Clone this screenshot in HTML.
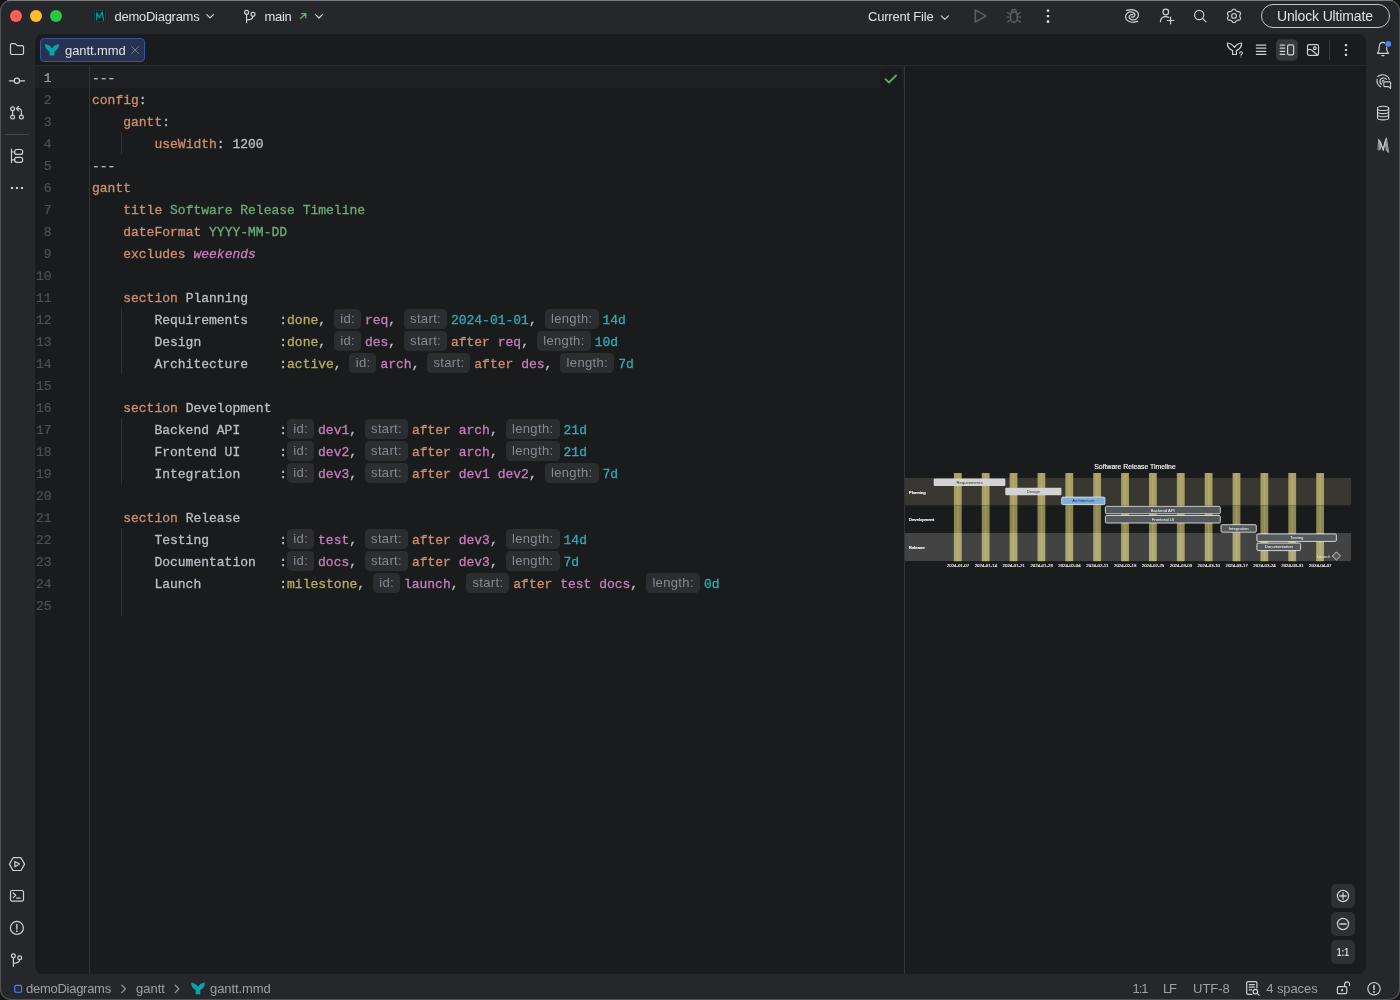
<!DOCTYPE html>
<html lang="en">
<head>
<meta charset="utf-8">
<title>gantt.mmd – demoDiagrams</title>
<style>
*{box-sizing:border-box;margin:0;padding:0}
html,body{width:1400px;height:1000px;overflow:hidden;background:#161617}
body{font-family:"Liberation Sans",sans-serif;font-size:13px;color:#dfe1e5;position:relative}
.abs{position:absolute}
#win{will-change:transform;position:absolute;left:0;top:0;width:1400px;height:1000px;background:#26272b;border-radius:11px;overflow:hidden}
#panel{position:absolute;left:35px;top:34px;width:1330.6px;height:940.4px;background:#1a1b1d;border-radius:8px;overflow:hidden}
.tl{position:absolute;top:10px;width:12px;height:12px;border-radius:50%}
.t13{position:absolute;font-size:13px;line-height:16px;white-space:nowrap;color:#dfe1e5}
svg{position:absolute;overflow:visible}
.ic{fill:none;stroke:#ced0d6;stroke-width:1.1;stroke-linecap:round;stroke-linejoin:round}
/* editor */
#code{position:absolute;left:57px;top:33.5px;-webkit-text-stroke:0.3px;font-family:"Liberation Mono",monospace;font-size:13px;line-height:22px;white-space:pre;color:#bcbec4}
#code div{height:22px}
#nums{position:absolute;left:0;top:33.5px;-webkit-text-stroke:0.2px;width:16.6px;font-family:"Liberation Mono",monospace;font-size:13px;line-height:22px;text-align:right;color:#4b5059}
.k{color:#cf8e6d}.s{color:#6aab73}.w{color:#c77dbb;font-style:italic}.y{color:#b3ae60}.p{color:#c77dbb}.n{color:#2aacb8}.t{color:#bcbec4}
.h{display:inline-block;height:20px;line-height:19px;vertical-align:top;margin-top:-1px;background:#2c2d31;border-radius:4.5px;color:#868991;font-family:"Liberation Sans",sans-serif;font-size:13px;text-align:center;letter-spacing:.35px;-webkit-text-stroke:0;padding-left:.35px}
.hi{width:27px;margin-right:4px}
.hs{width:43px;margin-right:4px}
.hl{width:54px;margin-right:4px}
.st{position:absolute;top:981px;font-size:13px;line-height:16px;color:#9da0a8;white-space:nowrap}
</style>
</head>
<body>
<div id="win">
  <!-- title bar -->
  <div class="tl" style="left:10px;background:#ff5f57"></div>
  <div class="tl" style="left:30px;background:#febc2e"></div>
  <div class="tl" style="left:50px;background:#28c840"></div>
  <div class="t13" style="left:114.5px;top:9px;letter-spacing:-0.27px">demoDiagrams</div>
  <div class="t13" style="left:264.5px;top:9px;letter-spacing:-0.3px">main</div>
  <div class="t13" style="left:868px;top:9px;letter-spacing:-0.2px">Current File</div>
  <div class="abs" style="left:1260.8px;top:4.2px;width:129.2px;height:23.6px;border:1.2px solid #c3c6cd;border-radius:12px"></div>
  <div class="t13" style="left:1277px;top:7.8px;font-size:14px;letter-spacing:-0.15px">Unlock Ultimate</div>

  <!-- editor panel -->
  <div id="panel">
    <!-- tab bar -->
    <div class="abs" style="left:0;top:31px;width:1331px;height:1px;background:#27292c"></div>
    <div class="abs" style="left:5px;top:3.8px;width:105px;height:24.2px;background:#263250;border:1.2px solid #35549a;border-radius:4px"></div>
    <div class="t13" style="left:30px;top:9px;letter-spacing:-0.1px">gantt.mmd</div>
    <!-- current line -->
    <div class="abs" style="left:0;top:32px;width:869px;height:22px;background:#1f2023"></div>
    <div class="abs" style="left:845px;top:34px;width:22px;height:22px;background:#1a1b1d;border-radius:5px"></div>
    <!-- gutter line & splitter -->
    <div class="abs" style="left:54px;top:32px;width:1px;height:908px;background:#303236"></div>
    <div class="abs" style="left:869px;top:32px;width:1px;height:908px;background:#313336"></div>
    <!-- indent guides -->
    <div class="abs" style="left:86px;top:98px;width:1px;height:22px;background:#2e3033"></div>
    <div class="abs" style="left:86px;top:274px;width:1px;height:66px;background:#2e3033"></div>
    <div class="abs" style="left:86px;top:384px;width:1px;height:66px;background:#2e3033"></div>
    <div class="abs" style="left:86px;top:494px;width:1px;height:88px;background:#2e3033"></div>
    <div id="nums"><div style="color:#a1a3ab">1</div><div>2</div><div>3</div><div>4</div><div>5</div><div>6</div><div>7</div><div>8</div><div>9</div><div>10</div><div>11</div><div>12</div><div>13</div><div>14</div><div>15</div><div>16</div><div>17</div><div>18</div><div>19</div><div>20</div><div>21</div><div>22</div><div>23</div><div>24</div><div>25</div></div>
    <div id="code"><div>---</div><div><span class="k">config</span>:</div><div>    <span class="k">gantt</span>:</div><div>        <span class="k">useWidth</span>: 1200</div><div>---</div><div><span class="k">gantt</span></div><div>    <span class="k">title</span> <span class="s">Software Release Timeline</span></div><div>    <span class="k">dateFormat</span> <span class="s">YYYY-MM-DD</span></div><div>    <span class="k">excludes</span> <span class="w">weekends</span></div><div></div><div>    <span class="k">section</span> Planning</div><div>        Requirements    :<span class="y">done</span>, <span class="h hi">id:</span><span class="p">req</span>, <span class="h hs">start:</span><span class="n">2024-01-01</span>, <span class="h hl">length:</span><span class="n">14d</span></div><div>        Design          :<span class="y">done</span>, <span class="h hi">id:</span><span class="p">des</span>, <span class="h hs">start:</span><span class="k">after</span> <span class="p">req</span>, <span class="h hl">length:</span><span class="n">10d</span></div><div>        Architecture    :<span class="y">active</span>, <span class="h hi">id:</span><span class="p">arch</span>, <span class="h hs">start:</span><span class="k">after</span> <span class="p">des</span>, <span class="h hl">length:</span><span class="n">7d</span></div><div></div><div>    <span class="k">section</span> Development</div><div>        Backend API     :<span class="h hi">id:</span><span class="p">dev1</span>, <span class="h hs">start:</span><span class="k">after</span> <span class="p">arch</span>, <span class="h hl">length:</span><span class="n">21d</span></div><div>        Frontend UI     :<span class="h hi">id:</span><span class="p">dev2</span>, <span class="h hs">start:</span><span class="k">after</span> <span class="p">arch</span>, <span class="h hl">length:</span><span class="n">21d</span></div><div>        Integration     :<span class="h hi">id:</span><span class="p">dev3</span>, <span class="h hs">start:</span><span class="k">after</span> <span class="p">dev1 dev2</span>, <span class="h hl">length:</span><span class="n">7d</span></div><div></div><div>    <span class="k">section</span> Release</div><div>        Testing         :<span class="h hi">id:</span><span class="p">test</span>, <span class="h hs">start:</span><span class="k">after</span> <span class="p">dev3</span>, <span class="h hl">length:</span><span class="n">14d</span></div><div>        Documentation   :<span class="h hi">id:</span><span class="p">docs</span>, <span class="h hs">start:</span><span class="k">after</span> <span class="p">dev3</span>, <span class="h hl">length:</span><span class="n">7d</span></div><div>        Launch          :<span class="y">milestone</span>, <span class="h hi">id:</span><span class="p">launch</span>, <span class="h hs">start:</span><span class="k">after</span> <span class="p">test docs</span>, <span class="h hl">length:</span><span class="n">0d</span></div><div></div></div>
    <svg id="gantt" width="470" height="130" viewBox="900 455 470 130" style="left:865px;top:421px" font-family="Liberation Sans, sans-serif">
    <rect x="905" y="477.9" width="446.1" height="27.4" fill="#383731"/>
    <rect x="905" y="533" width="446.1" height="28" fill="#434343"/>
    <rect x="953.90" y="473" width="7.8" height="32.3" fill="#a6a062"/>
    <rect x="953.90" y="505.3" width="7.8" height="27.7" fill="#8d8851"/>
    <rect x="953.90" y="533" width="7.8" height="28.2" fill="#aea972"/>
    <path d="M957.80 473V561.2" stroke="#dcd8b0" stroke-opacity="0.55" stroke-width="0.5"/>
    <rect x="981.77" y="473" width="7.8" height="32.3" fill="#a6a062"/>
    <rect x="981.77" y="505.3" width="7.8" height="27.7" fill="#8d8851"/>
    <rect x="981.77" y="533" width="7.8" height="28.2" fill="#aea972"/>
    <path d="M985.67 473V561.2" stroke="#dcd8b0" stroke-opacity="0.55" stroke-width="0.5"/>
    <rect x="1009.64" y="473" width="7.8" height="32.3" fill="#a6a062"/>
    <rect x="1009.64" y="505.3" width="7.8" height="27.7" fill="#8d8851"/>
    <rect x="1009.64" y="533" width="7.8" height="28.2" fill="#aea972"/>
    <path d="M1013.54 473V561.2" stroke="#dcd8b0" stroke-opacity="0.55" stroke-width="0.5"/>
    <rect x="1037.51" y="473" width="7.8" height="32.3" fill="#a6a062"/>
    <rect x="1037.51" y="505.3" width="7.8" height="27.7" fill="#8d8851"/>
    <rect x="1037.51" y="533" width="7.8" height="28.2" fill="#aea972"/>
    <path d="M1041.41 473V561.2" stroke="#dcd8b0" stroke-opacity="0.55" stroke-width="0.5"/>
    <rect x="1065.38" y="473" width="7.8" height="32.3" fill="#a6a062"/>
    <rect x="1065.38" y="505.3" width="7.8" height="27.7" fill="#8d8851"/>
    <rect x="1065.38" y="533" width="7.8" height="28.2" fill="#aea972"/>
    <path d="M1069.28 473V561.2" stroke="#dcd8b0" stroke-opacity="0.55" stroke-width="0.5"/>
    <rect x="1093.25" y="473" width="7.8" height="32.3" fill="#a6a062"/>
    <rect x="1093.25" y="505.3" width="7.8" height="27.7" fill="#8d8851"/>
    <rect x="1093.25" y="533" width="7.8" height="28.2" fill="#aea972"/>
    <path d="M1097.15 473V561.2" stroke="#dcd8b0" stroke-opacity="0.55" stroke-width="0.5"/>
    <rect x="1121.12" y="473" width="7.8" height="32.3" fill="#a6a062"/>
    <rect x="1121.12" y="505.3" width="7.8" height="27.7" fill="#8d8851"/>
    <rect x="1121.12" y="533" width="7.8" height="28.2" fill="#aea972"/>
    <path d="M1125.02 473V561.2" stroke="#dcd8b0" stroke-opacity="0.55" stroke-width="0.5"/>
    <rect x="1148.99" y="473" width="7.8" height="32.3" fill="#a6a062"/>
    <rect x="1148.99" y="505.3" width="7.8" height="27.7" fill="#8d8851"/>
    <rect x="1148.99" y="533" width="7.8" height="28.2" fill="#aea972"/>
    <path d="M1152.89 473V561.2" stroke="#dcd8b0" stroke-opacity="0.55" stroke-width="0.5"/>
    <rect x="1176.86" y="473" width="7.8" height="32.3" fill="#a6a062"/>
    <rect x="1176.86" y="505.3" width="7.8" height="27.7" fill="#8d8851"/>
    <rect x="1176.86" y="533" width="7.8" height="28.2" fill="#aea972"/>
    <path d="M1180.76 473V561.2" stroke="#dcd8b0" stroke-opacity="0.55" stroke-width="0.5"/>
    <rect x="1204.73" y="473" width="7.8" height="32.3" fill="#a6a062"/>
    <rect x="1204.73" y="505.3" width="7.8" height="27.7" fill="#8d8851"/>
    <rect x="1204.73" y="533" width="7.8" height="28.2" fill="#aea972"/>
    <path d="M1208.63 473V561.2" stroke="#dcd8b0" stroke-opacity="0.55" stroke-width="0.5"/>
    <rect x="1232.60" y="473" width="7.8" height="32.3" fill="#a6a062"/>
    <rect x="1232.60" y="505.3" width="7.8" height="27.7" fill="#8d8851"/>
    <rect x="1232.60" y="533" width="7.8" height="28.2" fill="#aea972"/>
    <path d="M1236.50 473V561.2" stroke="#dcd8b0" stroke-opacity="0.55" stroke-width="0.5"/>
    <rect x="1260.47" y="473" width="7.8" height="32.3" fill="#a6a062"/>
    <rect x="1260.47" y="505.3" width="7.8" height="27.7" fill="#8d8851"/>
    <rect x="1260.47" y="533" width="7.8" height="28.2" fill="#aea972"/>
    <path d="M1264.37 473V561.2" stroke="#dcd8b0" stroke-opacity="0.55" stroke-width="0.5"/>
    <rect x="1288.34" y="473" width="7.8" height="32.3" fill="#a6a062"/>
    <rect x="1288.34" y="505.3" width="7.8" height="27.7" fill="#8d8851"/>
    <rect x="1288.34" y="533" width="7.8" height="28.2" fill="#aea972"/>
    <path d="M1292.24 473V561.2" stroke="#dcd8b0" stroke-opacity="0.55" stroke-width="0.5"/>
    <rect x="1316.21" y="473" width="7.8" height="32.3" fill="#a6a062"/>
    <rect x="1316.21" y="505.3" width="7.8" height="27.7" fill="#8d8851"/>
    <rect x="1316.21" y="533" width="7.8" height="28.2" fill="#aea972"/>
    <path d="M1320.11 473V561.2" stroke="#dcd8b0" stroke-opacity="0.55" stroke-width="0.5"/>
    <text x="1135" y="469" font-size="6.85" fill="#fff" text-anchor="middle" stroke="#fff" stroke-width="0.12">Software Release Timeline</text>
    <text x="908.8" y="494.1" font-size="4.3" fill="#fff" stroke="#fff" stroke-width="0.2">Planning</text>
    <text x="908.8" y="521.4" font-size="4.3" fill="#fff" stroke="#fff" stroke-width="0.2">Development</text>
    <text x="908.8" y="549.2" font-size="4.3" fill="#fff" stroke="#fff" stroke-width="0.2">Release</text>
    <rect x="933.7" y="478.60" width="71.6" height="7.4" rx="0.9" fill="#d3d3d3"/>
    <text x="969.5" y="483.90" font-size="4.2" fill="#333" text-anchor="middle">Requirements</text>
    <rect x="1005.3" y="487.80" width="56.1" height="7.4" rx="0.9" fill="#d3d3d3"/>
    <text x="1033.3" y="493.10" font-size="4.2" fill="#333" text-anchor="middle">Design</text>
    <rect x="1061.7" y="497.10" width="43.2" height="7.5" rx="1.2" fill="#80aede" stroke="#e6ecf2" stroke-width="0.8"/>
    <text x="1083.3" y="502.30" font-size="4.2" fill="#20303f" text-anchor="middle">Architecture</text>
    <rect x="1105.4" y="506.30" width="114.9" height="7.5" rx="1.2" fill="#55585a" stroke="#ebebeb" stroke-width="0.85"/>
    <text x="1162.8" y="511.50" font-size="4.2" fill="#fff" text-anchor="middle">Backend API</text>
    <rect x="1105.4" y="515.50" width="114.9" height="7.5" rx="1.2" fill="#55585a" stroke="#ebebeb" stroke-width="0.85"/>
    <text x="1162.8" y="520.70" font-size="4.2" fill="#fff" text-anchor="middle">Frontend UI</text>
    <rect x="1221.0" y="524.70" width="35.3" height="7.5" rx="1.2" fill="#55585a" stroke="#ebebeb" stroke-width="0.85"/>
    <text x="1238.7" y="529.90" font-size="4.2" fill="#fff" text-anchor="middle">Integration</text>
    <rect x="1256.9" y="533.90" width="79.5" height="7.5" rx="1.2" fill="#55585a" stroke="#ebebeb" stroke-width="0.85"/>
    <text x="1296.7" y="539.10" font-size="4.2" fill="#fff" text-anchor="middle">Testing</text>
    <rect x="1256.9" y="543.10" width="43.7" height="7.5" rx="1.2" fill="#55585a" stroke="#ebebeb" stroke-width="0.85"/>
    <text x="1278.8" y="548.30" font-size="4.2" fill="#fff" text-anchor="middle">Documentation</text>
    <path d="M1336.4 551.9 L1340.5 556 L1336.4 560.1 L1332.3 556 Z" fill="#55585a" stroke="#e6e6e6" stroke-width="0.8"/>
    <text x="1330.4" y="557.5" font-size="4.2" fill="#e8e8e8" text-anchor="end">Launch</text>
    <text x="958.00" y="566.9" font-size="4.4" fill="#fff" text-anchor="middle" stroke="#fff" stroke-width="0.1">2024-01-07</text>
    <text x="985.87" y="566.9" font-size="4.4" fill="#fff" text-anchor="middle" stroke="#fff" stroke-width="0.1">2024-01-14</text>
    <text x="1013.74" y="566.9" font-size="4.4" fill="#fff" text-anchor="middle" stroke="#fff" stroke-width="0.1">2024-01-21</text>
    <text x="1041.61" y="566.9" font-size="4.4" fill="#fff" text-anchor="middle" stroke="#fff" stroke-width="0.1">2024-01-28</text>
    <text x="1069.48" y="566.9" font-size="4.4" fill="#fff" text-anchor="middle" stroke="#fff" stroke-width="0.1">2024-02-04</text>
    <text x="1097.35" y="566.9" font-size="4.4" fill="#fff" text-anchor="middle" stroke="#fff" stroke-width="0.1">2024-02-11</text>
    <text x="1125.22" y="566.9" font-size="4.4" fill="#fff" text-anchor="middle" stroke="#fff" stroke-width="0.1">2024-02-18</text>
    <text x="1153.09" y="566.9" font-size="4.4" fill="#fff" text-anchor="middle" stroke="#fff" stroke-width="0.1">2024-02-25</text>
    <text x="1180.96" y="566.9" font-size="4.4" fill="#fff" text-anchor="middle" stroke="#fff" stroke-width="0.1">2024-03-03</text>
    <text x="1208.83" y="566.9" font-size="4.4" fill="#fff" text-anchor="middle" stroke="#fff" stroke-width="0.1">2024-03-10</text>
    <text x="1236.70" y="566.9" font-size="4.4" fill="#fff" text-anchor="middle" stroke="#fff" stroke-width="0.1">2024-03-17</text>
    <text x="1264.57" y="566.9" font-size="4.4" fill="#fff" text-anchor="middle" stroke="#fff" stroke-width="0.1">2024-03-24</text>
    <text x="1292.44" y="566.9" font-size="4.4" fill="#fff" text-anchor="middle" stroke="#fff" stroke-width="0.1">2024-03-31</text>
    <text x="1320.31" y="566.9" font-size="4.4" fill="#fff" text-anchor="middle" stroke="#fff" stroke-width="0.1">2024-04-07</text>
    </svg>
  </div>

  <!-- status bar -->
  <div class="st" style="left:26px;letter-spacing:-0.27px">demoDiagrams</div>
  <div class="st" style="left:136px">gantt</div>
  <div class="st" style="left:210px;letter-spacing:-0.1px">gantt.mmd</div>
  <div class="st" style="left:1132.5px;letter-spacing:-1.1px">1:1</div>
  <div class="st" style="left:1163px;letter-spacing:-1.3px">LF</div>
  <div class="st" style="left:1193px">UTF-8</div>
  <div class="st" style="left:1266.3px;letter-spacing:-0.1px">4 spaces</div>
  <svg id="icons" width="1400" height="1000" viewBox="0 0 1400 1000" style="left:0;top:0;z-index:5" fill="none" stroke="#ced0d6" stroke-width="1.2" stroke-linecap="round" stroke-linejoin="round">
    <!-- project icon -->
    <rect x="94.5" y="10.4" width="11" height="11" rx="0.8" fill="#03191b" stroke="#0b474c" stroke-width="1"/>
    <path d="M96.6 19.7 L96.7 12.9 L99.5 17.6 L102 12 L103.6 20.2" stroke="#03919c" stroke-width="1.5" stroke-linejoin="round"/>
    <!-- chevrons -->
    <path d="M206.8 14.6 l3.3 3.3 l3.3 -3.3"/>
    <path d="M315.6 14.6 l3.4 3.4 l3.4 -3.4"/>
    <path d="M941.2 15.8 l3.6 3.6 l3.6 -3.6"/>
    <!-- branch icon (title) -->
    <circle cx="246.6" cy="12.3" r="2"/><circle cx="253" cy="14.3" r="2"/>
    <path d="M246.6 14.3 V22.3 M253 16.3 c0 3 -2.5 3.6 -6.4 3.7"/>
    <!-- green arrow -->
    <path d="M300.6 18.6 L305.8 13.6 M301.6 13.6 H305.8 V17.8" stroke="#5fad65" stroke-width="1.4"/>
    <!-- run / debug -->
    <path d="M975.3 10 L986.1 15.9 L975.3 22 Z" stroke="#5a5d63" stroke-width="1.6"/>
    <g stroke="#5a5d63" stroke-width="1.4">
      <path d="M1010.6 15.4 a3.3 3.4 0 0 1 6.6 0 v3.4 a3.3 3.5 0 0 1 -6.6 0 z"/>
      <path d="M1011.5 12.4 a2.4 2.9 0 0 1 4.8 0"/>
      <path d="M1010.5 14.3 L1007.6 12.5 M1010.4 17.1 H1007 M1010.6 20 L1007.6 21.9 M1017.3 14.3 L1020.2 12.5 M1017.4 17.1 H1020.8 M1017.2 20 L1020.2 21.9"/>
    </g>
    <!-- kebab title -->
    <g fill="#dfe1e5" stroke="none"><rect x="1046.80" y="9.40" width="2.40" height="2.40" rx="0.35"/><rect x="1046.80" y="14.90" width="2.40" height="2.40" rx="0.35"/><rect x="1046.80" y="20.30" width="2.40" height="2.40" rx="0.35"/></g>
    <!-- AI spiral -->
    <path d="M1126.43 10.43 C1127.36 10.29 1130.21 9.36 1132.00 9.57 C1133.79 9.79 1136.07 10.79 1137.14 11.71 C1138.21 12.64 1138.43 14.07 1138.43 15.14 C1138.43 16.21 1137.86 17.36 1137.14 18.14 C1136.43 18.93 1135.14 19.64 1134.14 19.86 C1133.14 20.07 1131.96 19.79 1131.14 19.43 C1130.32 19.07 1129.54 18.29 1129.21 17.71 C1128.89 17.14 1128.96 16.50 1129.21 16.00 C1129.46 15.50 1130.11 14.93 1130.71 14.71 C1131.32 14.50 1132.50 14.71 1132.86 14.71"/>
    <path d="M1137.57 21.37 C1136.64 21.51 1133.79 22.44 1132.00 22.23 C1130.21 22.01 1127.93 21.01 1126.86 20.09 C1125.79 19.16 1125.57 17.73 1125.57 16.66 C1125.57 15.59 1126.14 14.44 1126.86 13.66 C1127.57 12.87 1128.86 12.16 1129.86 11.94 C1130.86 11.73 1132.04 12.01 1132.86 12.37 C1133.68 12.73 1134.46 13.51 1134.79 14.09 C1135.11 14.66 1135.04 15.30 1134.79 15.80 C1134.54 16.30 1133.89 16.87 1133.29 17.09 C1132.68 17.30 1131.50 17.09 1131.14 17.09"/>
    <!-- add user -->
    <circle cx="1165.8" cy="12" r="2.8"/>
    <path d="M1160.4 21.6 c0.3 -3.2 2.6 -5 5.4 -5 c1.2 0 2.2 0.3 3 0.8 M1170.6 17.2 V23.8 M1167.3 20.5 H1173.9"/>
    <!-- search -->
    <circle cx="1199.2" cy="15" r="4.6"/><path d="M1202.6 18.4 L1206 21.9"/>
    <!-- gear -->
    <circle cx="1234" cy="15.9" r="2.35" stroke-width="1.15"/>
    <path d="M1239.81 15.90 L1239.80 16.25 L1239.76 16.60 L1239.98 17.00 L1240.26 17.45 L1240.50 17.94 L1240.61 18.43 L1240.41 18.83 L1240.19 19.21 L1239.94 19.58 L1239.67 19.93 L1239.16 20.09 L1238.58 20.14 L1238.02 20.14 L1237.54 20.17 L1237.23 20.37 L1236.91 20.56 L1236.57 20.73 L1236.22 20.87 L1235.96 21.24 L1235.68 21.70 L1235.34 22.13 L1234.93 22.46 L1234.47 22.51 L1234.00 22.52 L1233.53 22.51 L1233.07 22.46 L1232.66 22.13 L1232.32 21.70 L1232.04 21.24 L1231.78 20.87 L1231.43 20.73 L1231.09 20.56 L1230.77 20.37 L1230.46 20.17 L1229.98 20.14 L1229.42 20.14 L1228.84 20.09 L1228.33 19.93 L1228.06 19.58 L1227.81 19.21 L1227.59 18.83 L1227.39 18.43 L1227.50 17.94 L1227.74 17.45 L1228.02 17.00 L1228.24 16.60 L1228.20 16.25 L1228.19 15.90 L1228.20 15.55 L1228.24 15.20 L1228.02 14.80 L1227.74 14.35 L1227.50 13.86 L1227.39 13.37 L1227.59 12.97 L1227.81 12.59 L1228.06 12.22 L1228.33 11.87 L1228.84 11.71 L1229.42 11.66 L1229.98 11.66 L1230.46 11.63 L1230.77 11.43 L1231.09 11.24 L1231.43 11.07 L1231.78 10.93 L1232.04 10.56 L1232.32 10.10 L1232.66 9.67 L1233.07 9.34 L1233.53 9.29 L1234.00 9.28 L1234.47 9.29 L1234.93 9.34 L1235.34 9.67 L1235.68 10.10 L1235.96 10.56 L1236.22 10.93 L1236.57 11.07 L1236.91 11.24 L1237.23 11.43 L1237.54 11.63 L1238.02 11.66 L1238.58 11.66 L1239.16 11.71 L1239.67 11.87 L1239.94 12.22 L1240.19 12.59 L1240.41 12.97 L1240.61 13.37 L1240.50 13.86 L1240.26 14.35 L1239.98 14.80 L1239.76 15.20 L1239.80 15.55Z" stroke-width="1.15"/>
    <!-- left stripe -->
    <path d="M10.5 45 a1.4 1.4 0 0 1 1.4 -1.4 h3.3 l2.1 2.1 h4.8 a1.4 1.4 0 0 1 1.4 1.4 v6 a1.4 1.4 0 0 1 -1.4 1.4 h-10.2 a1.4 1.4 0 0 1 -1.4 -1.4 z"/>
    <circle cx="16.9" cy="80.8" r="2.6"/><path d="M9.4 80.8 H14.2 M19.6 80.8 H24.6"/>
    <circle cx="12.6" cy="108.7" r="1.9"/><circle cx="12.6" cy="117.1" r="1.9"/><circle cx="21.4" cy="117.1" r="1.9"/>
    <path d="M12.6 110.6 V115.2 M21.4 115.2 V111.2 a2.5 2.5 0 0 0 -2.5 -2.5 H16.6 M18.6 106.5 L16.4 108.7 L18.6 110.9"/>
    <path d="M5.5 134.5 H28.5" stroke="#43454a" stroke-width="1"/>
    <path d="M11.5 149.2 V162.6 M11.5 152 H14.6 M11.5 159.8 H14.6"/>
    <rect x="14.7" y="149.5" width="7.9" height="4.9" rx="2"/><rect x="14.7" y="157.4" width="7.9" height="4.9" rx="2"/>
    <g fill="#ced0d6" stroke="none"><rect x="10.90" y="186.90" width="2.20" height="2.20" rx="0.35"/><rect x="15.90" y="186.90" width="2.20" height="2.20" rx="0.35"/><rect x="20.90" y="186.90" width="2.20" height="2.20" rx="0.35"/></g>
    <path d="M9.4 864.1 L13.1 857.7 H20.9 L24.6 864.1 L20.9 870.5 H13.1 Z"/>
    <path d="M14.9 861.4 L19.5 864.1 L14.9 866.8 Z"/>
    <rect x="10.5" y="890.5" width="13" height="10.6" rx="1.6"/><path d="M13.2 893 L15.7 895.3 L13.2 897.6 M16.6 898.1 H20.2"/>
    <circle cx="16.9" cy="927.9" r="6.5"/><path d="M16.9 924.4 V929" stroke-width="1.4"/><circle cx="16.9" cy="931.2" r="0.9" fill="#ced0d6" stroke="none"/>
    <circle cx="13.4" cy="955.7" r="1.9"/><circle cx="19.7" cy="957.7" r="1.9"/>
    <path d="M13.4 957.6 V966.4 M19.7 959.6 c0 2.9 -2.4 3.7 -6.3 3.8"/>
    <!-- right stripe -->
    <path d="M1377.5 53.4 L1378.7 50.8 C1379.3 49.3 1379.1 47.6 1379.3 46.3 C1379.6 43.8 1381.2 42.4 1382.9 42.4 C1384.6 42.4 1386.2 43.8 1386.5 46.3 C1386.7 47.6 1386.5 49.3 1387.1 50.8 L1388.5 53.4 Z" stroke-width="1.15"/>
    <path d="M1381 55.1 H1384.8 C1384.3 56.8 1381.5 56.8 1381 55.1 Z" fill="#ced0d6" stroke="none"/>
    <circle cx="1388.2" cy="43.9" r="3.4" fill="#26272b" stroke="none"/>
    <circle cx="1388.2" cy="43.9" r="2.95" fill="#4786f4" stroke="none"/>
    <path d="M1377.7 76.7 C1379.6 74.6 1383.4 74.3 1386 75.6 C1387.8 76.5 1389 78 1389.3 79.7 M1377.1 79.2 C1376.6 82.2 1378 85.3 1380.7 86.8 M1386.3 79.3 C1384.6 77.4 1381.4 77.6 1380.3 79.8 C1379.5 81.6 1380 83.3 1381.5 84.3 M1383.8 80.3 C1382.7 80.2 1382 81.2 1382.4 82.1" stroke-width="1.1"/>
    <path d="M1384.6 81.9 h5.2 a0.8 0.8 0 0 1 0.8 0.8 v5.7 l-2 -1.8 h-4 a0.8 0.8 0 0 1 -0.8 -0.8 v-3.1 a0.8 0.8 0 0 1 0.8 -0.8 z" fill="#26272b" stroke-width="1.1"/>
    <ellipse cx="1383.1" cy="108.4" rx="5.6" ry="2.1" stroke-width="1.1"/>
    <path d="M1377.5 108.4 V117.7 c0 1.3 2.5 2.2 5.6 2.2 s5.6 -0.9 5.6 -2.2 V108.4 M1377.5 111.4 c0 1.3 2.5 2.2 5.6 2.2 s5.6 -0.9 5.6 -2.2 M1377.5 114.6 c0 1.3 2.5 2.2 5.6 2.2 s5.6 -0.9 5.6 -2.2" stroke-width="1.1"/>
    <g stroke-width="0.8" stroke="#c4c6cc">
      <path d="M1378 149.6 L1378.7 139.2 L1383 149 L1386.4 137.8 L1388.6 152.3"/>
      <path d="M1379.2 150.2 L1379.8 140.6 L1383.3 150.8 L1385.7 139.2 L1387.5 152"/>
      <path d="M1380.4 149.2 L1380.7 142.4 L1383.2 150 L1385 142 L1386.4 150.6"/>
    </g>
    <!-- editor toolbar -->
    <rect x="1276" y="39.2" width="21.8" height="21.6" rx="4.5" fill="#37393d" stroke="none"/>
    <path d="M1227.4 43 c2.6 0.2 5.2 1.6 7.1 4.4 c1.9 -2.8 4.5 -4.2 7.1 -4.4 c0.2 3.2 -1.6 6 -5.2 7.6 v3.9 h-3.8 v-3.9 c-3.6 -1.6 -5.4 -4.4 -5.2 -7.6 z" stroke-width="1.2"/>
    <path d="M1239.6 53 c0 -1.7 2.8 -1.7 2.8 0 c0 1.1 -1.4 1.1 -1.4 2.3 M1241 56.9 v0.1" stroke-width="1.05" stroke="#d6d8de"/>
    <path d="M1256.4 45.2 H1265.8 M1256.4 48.2 H1265.8 M1256.4 51.3 H1265.8 M1256.4 54.4 H1265.8"/>
    <path d="M1280.2 45.2 H1284.6 M1280.2 48.2 H1284.6 M1280.2 51.3 H1284.6 M1280.2 54.4 H1284.6"/>
    <rect x="1287.6" y="44.9" width="6" height="10" rx="1.4"/>
    <rect x="1307.5" y="44.7" width="11" height="10.6" rx="1.5"/><circle cx="1314.8" cy="48.2" r="1.35"/><path d="M1307.8 50 c2 -1.2 3.6 -0.4 5 1 L1317.6 55"/>
    <path d="M1329.5 40 V60" stroke="#393b40" stroke-width="1"/>
    <g fill="#ced0d6" stroke="none"><rect x="1344.90" y="44.10" width="2.20" height="2.20" rx="0.35"/><rect x="1344.90" y="48.90" width="2.20" height="2.20" rx="0.35"/><rect x="1344.90" y="53.70" width="2.20" height="2.20" rx="0.35"/></g>
    <!-- tab icon + close -->
    <path d="M45 44 c2.8 0.3 5.2 1.6 7 4.2 c1.8 -2.6 4.2 -3.9 7 -4.2 c0.2 3.6 -1.6 6 -4.6 7.4 v4.2 h-4.8 v-4.2 c-3 -1.4 -4.8 -3.8 -4.6 -7.4 z" fill="#08a2ad" stroke="none"/>
    <path d="M131.6 46.5 L138.7 53.6 M138.7 46.5 L131.6 53.6" stroke="#7e8188" stroke-width="1"/>
    <!-- check -->
    <path d="M885.5 79.2 L888.9 82.5 L896.1 75.5" stroke="#5fad65" stroke-width="1.75"/>
    <!-- zoom buttons -->
    <g fill="#2e3033" stroke="none"><rect x="1331" y="884" width="24" height="24" rx="5"/><rect x="1331" y="912" width="24" height="24" rx="5"/><rect x="1331" y="940" width="24" height="24" rx="5"/></g>
    <circle cx="1343" cy="896" r="5.6"/><path d="M1339.8 896 H1346.2 M1343 892.8 V899.2" stroke-width="1.3"/>
    <circle cx="1343" cy="924" r="5.6"/><path d="M1339.8 924 H1346.2" stroke-width="1.3"/>
    <text transform="translate(1342.9 955.9) scale(0.84 1)" font-family="Liberation Sans, sans-serif" font-size="10.2" font-weight="bold" text-anchor="middle" fill="#ced0d6" stroke="none">1:1</text>
    <!-- status bar -->
    <rect x="14.8" y="985.4" width="6.8" height="6.8" rx="1.3" stroke="#4a86f7" fill="#1e2a48" stroke-width="1.1"/>
    <path d="M121.8 985.2 l3.6 3.7 l-3.6 3.7 M175.2 985.2 l3.6 3.7 l-3.6 3.7" stroke="#9da0a8"/>
    <path d="M191.2 982.6 c2.8 0.3 5 1.6 6.8 4.2 c1.8 -2.6 4 -3.9 6.8 -4.2 c0.2 3.6 -1.5 6 -4.5 7.4 v4.2 h-4.6 v-4.2 c-3 -1.4 -4.7 -3.8 -4.5 -7.4 z" fill="#08a2ad" stroke="none"/>
    <g stroke="#cdcfd5">
      <path d="M1252 994.4 H1248 a1.3 1.3 0 0 1 -1.3 -1.3 V982.9 a1.3 1.3 0 0 1 1.3 -1.3 h7.6 a1.3 1.3 0 0 1 1.3 1.3 V988 M1249.2 984.6 H1254.4 M1249.2 987.2 H1254.4 M1249.2 989.8 H1251.6"/>
      <circle cx="1255.4" cy="991.6" r="2.3"/><path d="M1257.2 993.4 L1259.2 995.4"/>
      <rect x="1337.4" y="986.6" width="9.4" height="7" rx="1.3"/><rect x="1341.2" y="989" width="1.8" height="2.2" fill="#cdcfd5" stroke="none"/>
      <path d="M1344.6 986.4 V984.4 a2.5 2.5 0 0 1 5 0 V985.4"/>
      <circle cx="1374" cy="988.7" r="6.2"/><path d="M1374 985.4 V989.6" stroke-width="1.5"/><circle cx="1374" cy="992" r="0.95" fill="#cdcfd5" stroke="none"/>
    </g>
  </svg>
</div>
<svg id="winborder" width="1400" height="1000" viewBox="0 0 1400 1000" style="left:0;top:0;z-index:50" fill="none">
  <rect x="0.5" y="0.5" width="1399" height="999" rx="10.5" stroke="#505155" stroke-width="1.2"/>
  <path d="M7 0.5 H1393" stroke="#7b7c7e" stroke-width="1.2"/>
</svg>
</body>
</html>
